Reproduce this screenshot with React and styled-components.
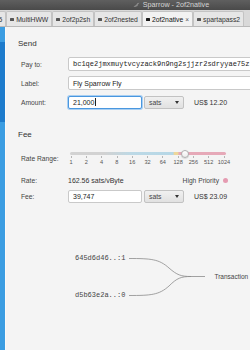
import React from 'react';
import styled, { createGlobalStyle } from 'styled-components';

const GlobalStyle = createGlobalStyle`
  html, body {
    margin: 0;
    padding: 0;
    background: #f4f4f4;
  }
  body {
    font-family: "Liberation Sans", Arial, sans-serif;
    color: #333;
  }
`;

const Viewport = styled.div`
  width: 250px;
  height: 350px;
  overflow: hidden;
  background: #f4f4f4;
`;

const Window = styled.div`
  width: 342px;
  height: 350px;
  display: flex;
  flex-direction: column;
`;

const TitleBar = styled.div`
  height: 10px;
  flex: none;
  display: flex;
  align-items: center;
  justify-content: center;
  gap: 3px;
  background: linear-gradient(#5f5f5f, #4a4a4a);
  color: #d4d4d4;
  font-size: 7.2px;
  line-height: 10px;
`;

const TabBar = styled.div`
  height: 16px;
  flex: none;
  display: flex;
  align-items: flex-end;
  background: #d9d9d9;
  border-bottom: 1px solid #b9b9b9;
  overflow: hidden;
`;

const Tab = styled.div`
  height: 14px;
  flex: none;
  display: flex;
  align-items: center;
  gap: 2px;
  padding: 0 3px 0 3px;
  background: ${(p) => (p.$active ? '#f2f2f2' : '#e6e6e6')};
  border: 1px solid #c3c3c3;
  border-bottom: none;
  border-radius: 2px 2px 0 0;
  font-size: 6.8px;
  color: ${(p) => (p.$active ? '#111' : '#333')};
  white-space: nowrap;
  &:first-child {
    margin-left: -9px;
  }
`;

const TabIcon = styled.span`
  width: 4px;
  height: 3px;
  background: ${(p) => (p.$active ? '#1a1a1a' : '#555')};
  border-radius: 0.5px;
`;

const Close = styled.span`
  font-size: 6.5px;
  color: #555;
`;

const Main = styled.div`
  flex: 1;
  display: flex;
  min-height: 0;
`;

const Sidebar = styled.div`
  width: 5px;
  flex: none;
  display: flex;
  flex-direction: column;
  border-right: 1px solid #fafafa;
`;

const SideSegment = styled.div`
  height: ${(p) => (p.$h ? `${p.$h}px` : 'auto')};
  flex: ${(p) => (p.$h ? 'none' : '1')};
  background: ${(p) => (p.$active ? '#1d7bcc' : '#3b9de2')};
`;

const Content = styled.div`
  flex: 1;
  padding: 12px 0 0 12px;
  display: flex;
  flex-direction: column;
`;

const Heading = styled.div`
  font-size: 8px;
  line-height: 10px;
  height: 10px;
  color: #333;
  margin-top: ${(p) => p.$mt || 0}px;
`;

const FieldRow = styled.div`
  display: grid;
  grid-template-columns: 47px 1fr;
  align-items: center;
  height: ${(p) => p.$h}px;
  margin-top: ${(p) => p.$mt}px;
  padding-left: 3px;
`;

const Label = styled.div`
  font-size: 6.7px;
  color: #444;
`;

const Inline = styled.div`
  display: flex;
  align-items: center;
  gap: 2px;
  height: 100%;
  width: ${(p) => (p.$w ? `${p.$w}px` : 'auto')};
  justify-content: ${(p) => (p.$spread ? 'space-between' : 'flex-start')};
`;

const TextInput = styled.div`
  box-sizing: border-box;
  height: ${(p) => p.$h || 14}px;
  width: ${(p) => (p.$w ? `${p.$w}px` : '100%')};
  display: flex;
  align-items: center;
  padding-left: 4px;
  background: #fff;
  border: 1px solid ${(p) => (p.$focus ? '#4a97df' : '#c9c9c9')};
  box-shadow: ${(p) => (p.$focus ? '0 0 0 1px #a9cff2' : 'none')};
  border-radius: 2px;
  font-family: ${(p) =>
    p.$mono ? '"Liberation Mono", "DejaVu Sans Mono", monospace' : '"Liberation Sans", Arial, sans-serif'};
  font-size: 7px;
  color: #222;
  white-space: nowrap;
  overflow: hidden;
`;

const Caret = styled.span`
  width: 0.6px;
  height: 8px;
  background: #222;
  margin-left: 0.5px;
`;

const Combo = styled.div`
  box-sizing: border-box;
  width: 40px;
  height: 13px;
  display: flex;
  align-items: center;
  justify-content: space-between;
  padding: 0 4px;
  background: linear-gradient(#f0f0f0, #e1e1e1);
  border: 1px solid #c2c2c2;
  border-radius: 2px;
  font-size: 6.8px;
  color: #444;
`;

const Arrow = styled.span`
  width: 0;
  height: 0;
  border-left: 2.5px solid transparent;
  border-right: 2.5px solid transparent;
  border-top: 3px solid #333;
`;

const Fiat = styled.span`
  font-size: 7px;
  color: #333;
  margin-left: 8px;
`;

const Value = styled.span`
  font-size: 7px;
  color: #333;
`;

const Priority = styled.span`
  display: flex;
  align-items: center;
  gap: 4px;
  font-size: 6.7px;
  color: #444;
`;

const Dot = styled.span`
  width: 5px;
  height: 5px;
  border-radius: 50%;
  background: #e59bb1;
`;

const Slider = styled.div`
  width: 160px;
  height: 100%;
  display: flex;
  flex-direction: column;
  padding-left: 2px;
  box-sizing: border-box;
`;

const Track = styled.div`
  position: relative;
  width: 156px;
  height: 3px;
  margin-top: 4px;
  border-radius: 2px;
  background: linear-gradient(
    to right,
    #d2d2d2 0%,
    #d2d2d2 22%,
    #bcd9e6 40%,
    #b6d7e6 66%,
    #eed79a 67%,
    #eed79a 69%,
    #e6a9b8 70%,
    #e6a9b8 100%
  );
`;

const Thumb = styled.span`
  position: absolute;
  top: 50%;
  width: 8px;
  height: 8px;
  margin: -4px 0 0 -4px;
  border-radius: 50%;
  background: linear-gradient(#ffffff, #ececec);
  border: 0.6px solid #b0b0b0;
  box-sizing: border-box;
  box-shadow: 0 0.5px 1px rgba(0, 0, 0, 0.2);
`;

const Ticks = styled.div`
  display: flex;
  justify-content: space-between;
  width: 153px;
  margin-left: 1px;
  margin-top: 1px;
`;

const Tick = styled.div`
  width: 0;
  display: flex;
  flex-direction: column;
  align-items: center;
`;

const TickMark = styled.span`
  width: 0.6px;
  height: 2px;
  background: #b5b5b5;
`;

const TickLabel = styled.span`
  font-size: 5.6px;
  line-height: 7px;
  margin-top: 1px;
  color: #555;
  white-space: nowrap;
`;

const Diagram = styled.div`
  display: flex;
  align-items: center;
  margin-top: 51px;
  padding-left: 57px;
`;

const Inputs = styled.div`
  display: flex;
  flex-direction: column;
  gap: 29px;
`;

const Outpoint = styled.span`
  font-family: "Liberation Mono", "DejaVu Sans Mono", monospace;
  font-size: 7px;
  line-height: 8px;
  color: #444;
`;

const TxLabel = styled.span`
  font-size: 6.5px;
  color: #444;
  margin-left: 5px;
`;

const rates = ['1', '2', '4', '8', '16', '32', '64', '128', '256', '512', '1024'];

const tabs = ['s5', 'MultiHWW', '2of2p2sh', '2of2nested', '2of2native', 'spartapass2'];

export default function App() {
  return (
    <Viewport>
      <GlobalStyle />
      <Window>
        <TitleBar>
          <svg width="7" height="6" viewBox="0 0 7 6">
            <path d="M0.5 4.5 L3 3 L4.5 1 L6.5 0.8 L5 2.5 L4.5 4 L2 5 Z" fill="#8a8a8a" />
          </svg>
          <span>Sparrow - 2of2native</span>
        </TitleBar>
        <TabBar>
          {tabs.map((t) => {
            const active = t === '2of2native';
            return (
              <Tab key={t} $active={active}>
                {t !== 's5' && <TabIcon $active={active} />}
                <span>{t}</span>
                {active && <Close>×</Close>}
              </Tab>
            );
          })}
        </TabBar>
        <Main>
          <Sidebar>
            <SideSegment $h={15} />
            <SideSegment $h={80} $active />
            <SideSegment />
          </Sidebar>
          <Content>
            <Heading>Send</Heading>
            <FieldRow $h={14} $mt={8}>
              <Label>Pay to:</Label>
              <TextInput $mono>bc1qe2jmxmuytvcyzack9n9ng2sjjzr2sdryyae75zr</TextInput>
            </FieldRow>
            <FieldRow $h={14} $mt={5}>
              <Label>Label:</Label>
              <TextInput>Fly Sparrow Fly</TextInput>
            </FieldRow>
            <FieldRow $h={14} $mt={5}>
              <Label>Amount:</Label>
              <Inline>
                <TextInput $w={74} $h={13} $focus>
                  21,000
                  <Caret />
                </TextInput>
                <Combo>
                  sats
                  <Arrow />
                </Combo>
                <Fiat>US$ 12.20</Fiat>
              </Inline>
            </FieldRow>

            <Heading $mt={21}>Fee</Heading>
            <FieldRow $h={20} $mt={8}>
              <Label>Rate Range:</Label>
              <Slider>
                <Track>
                  <Thumb style={{ left: '74%' }} />
                </Track>
                <Ticks>
                  {rates.map((r) => (
                    <Tick key={r}>
                      <TickMark />
                      <TickLabel>{r}</TickLabel>
                    </Tick>
                  ))}
                </Ticks>
              </Slider>
            </FieldRow>
            <FieldRow $h={12} $mt={6}>
              <Label>Rate:</Label>
              <Inline $w={160} $spread>
                <Value>162.56 sats/vByte</Value>
                <Priority>
                  High Priority
                  <Dot />
                </Priority>
              </Inline>
            </FieldRow>
            <FieldRow $h={14} $mt={3}>
              <Label>Fee:</Label>
              <Inline>
                <TextInput $w={74} $h={13}>39,747</TextInput>
                <Combo>
                  sats
                  <Arrow />
                </Combo>
                <Fiat>US$ 23.09</Fiat>
              </Inline>
            </FieldRow>

            <Diagram>
              <Inputs>
                <Outpoint>645d6d46..:1</Outpoint>
                <Outpoint>d5b63e2a..:0</Outpoint>
              </Inputs>
              <svg width="80" height="45" viewBox="0 0 80 45" style={{ marginLeft: 4 }}>
                <path
                  d="M0 4.5 C 22 4.5, 30 5, 40 14 C 48 21, 52 22.5, 62 22.5 L 76 22.5"
                  fill="none"
                  stroke="#8c8c8c"
                  strokeWidth="0.8"
                />
                <path
                  d="M0 41.5 C 22 41.5, 30 41, 40 32 C 48 24, 52 22.5, 62 22.5"
                  fill="none"
                  stroke="#8c8c8c"
                  strokeWidth="0.8"
                />
              </svg>
              <TxLabel>Transaction</TxLabel>
            </Diagram>
          </Content>
        </Main>
      </Window>
    </Viewport>
  );
}
